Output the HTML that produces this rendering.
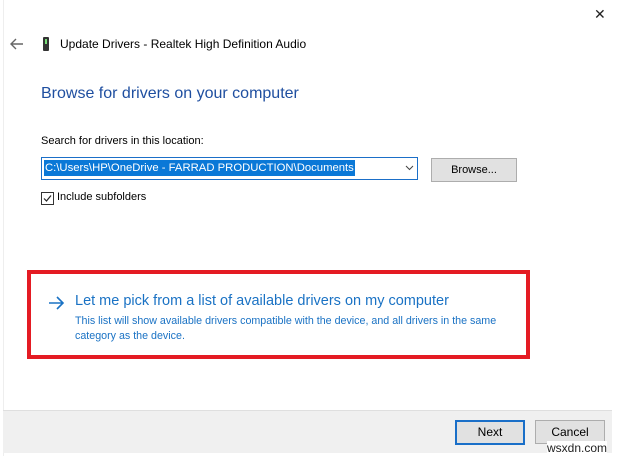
<!DOCTYPE html>
<html><head><style>
body{margin:0;width:617px;height:456px;background:#fff;font-family:"Liberation Sans",sans-serif;position:relative;overflow:hidden;font-size:11px;color:#000}
.a{position:absolute}
</style></head><body>
<div class="a" style="left:0;top:0;width:3px;height:456px;background:#fff;border-right:1px solid #eee"></div>
<div class="a" style="left:594px;top:6px;font-size:14px;color:#222">✕</div>
<svg class="a" style="left:10px;top:38px" width="14" height="12"><path d="M13 6H2M6 1L1 6l5 5" stroke="#666" stroke-width="1.4" fill="none"/></svg>
<div class="a" style="left:43px;top:37px;width:6px;height:14px;background:#333;border-radius:1px"></div>
<div class="a" style="left:45px;top:39px;width:2px;height:5px;background:#7d7"></div>
<div class="a" style="left:60px;top:37px;font-size:12px">Update Drivers - Realtek High Definition Audio</div>
<div class="a" style="left:41px;top:85px;font-size:16px;color:#1f4fa0">Browse for drivers on your computer</div>
<div class="a" style="left:41px;top:135px;">Search for drivers in this location:</div>
<div class="a" style="left:41px;top:157px;width:375px;height:21px;border:1px solid #1b6fc8;background:#fff"></div>
<div class="a" style="left:44px;top:160px;height:16px;line-height:16px;background:#0a78d7;color:#fff;padding:0 1px;font-size:11.3px">C:\Users\HP\OneDrive - FARRAD PRODUCTION\Documents</div>
<svg class="a" style="left:405px;top:165px" width="9" height="6"><path d="M1 1l3.5 3.5L8 1" stroke="#444" fill="none"/></svg>
<div class="a" style="left:431px;top:158px;width:84px;height:22px;border:1px solid #adadad;background:#e1e1e1;text-align:center;line-height:22px">Browse...</div>
<div class="a" style="left:41px;top:192px;width:11px;height:11px;border:1px solid #333"></div>
<svg class="a" style="left:42px;top:193px" width="11" height="11"><path d="M2 5.5l2.5 2.5L9 2.5" stroke="#222" stroke-width="1.2" fill="none"/></svg>
<div class="a" style="left:57px;top:191px;">Include subfolders</div>
<div class="a" style="left:27px;top:270px;width:495px;height:81px;border:4px solid #e41b23"></div>
<svg class="a" style="left:48px;top:296px" width="17" height="14"><path d="M1 7h14M9 1l6 6-6 6" stroke="#1a72c4" stroke-width="1.6" fill="none"/></svg>
<div class="a" style="left:75px;top:293px;font-size:14.5px;color:#1a72c4;white-space:nowrap">Let me pick from a list of available drivers on my computer</div>
<div class="a" style="left:75px;top:314px;font-size:10.7px;color:#1a72c4;line-height:15px;width:445px">This list will show available drivers compatible with the device, and all drivers in the same category as the device.</div>
<div class="a" style="left:3px;top:410px;width:609px;height:42px;background:#f0f0f0;border-top:1px solid #dfdfdf"></div>
<div class="a" style="left:455px;top:420px;width:66px;height:21px;border:2px solid #1a6fc8;background:#e1e1e1;text-align:center;line-height:21px;font-size:12px">Next</div>
<div class="a" style="left:535px;top:420px;width:68px;height:22px;border:1px solid #adadad;background:#e1e1e1;text-align:center;line-height:22px;font-size:12px">Cancel</div>
<div class="a" style="left:547px;top:441px;font-size:12px;color:#222;background:#fff">wsxdn.com</div>
</body></html>
